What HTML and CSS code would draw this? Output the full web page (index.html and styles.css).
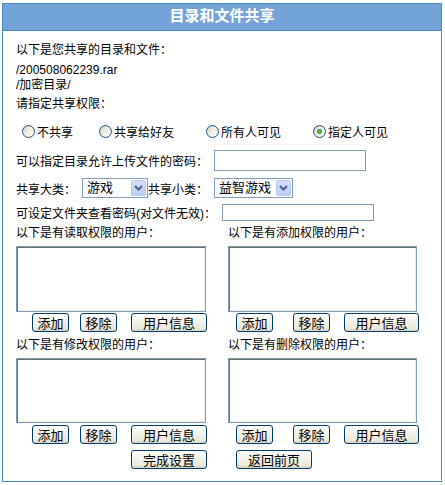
FILE: index.html
```html
<!DOCTYPE html>
<html lang="zh-CN">
<head>
<meta charset="utf-8">
<title>目录和文件共享</title>
<link rel="stylesheet" href="styles.css">
</head>
<body>
<div class="panel">
  <div class="panel-head">目录和文件共享</div>
  <div class="panel-body">
    <div class="line intro">以下是您共享的目录和文件：</div>
    <div class="files">
      <div class="line">/200508062239.rar</div>
      <div class="line">/加密目录/</div>
    </div>
    <div class="line perm-title">请指定共享权限：</div>
    <div class="radios">
      <label class="opt"><input type="radio" name="perm" class="radio">不共享</label>
      <label class="opt"><input type="radio" name="perm" class="radio">共享给好友</label>
      <label class="opt"><input type="radio" name="perm" class="radio">所有人可见</label>
      <label class="opt"><input type="radio" name="perm" class="radio" checked>指定人可见</label>
    </div>
    <div class="row row-pwd">
      <span>可以指定目录允许上传文件的密码：</span>
      <input type="text" class="text text-pwd">
    </div>
    <div class="row row-cat">
      <span>共享大类：</span>
      <span class="sel sel-a"><select><option>游戏</option></select><span class="arrow"><svg width="9" height="6" viewBox="0 0 9 6"><path d="M1 1 L4.5 4.5 L8 1" fill="none" stroke="#4d6185" stroke-width="2"/></svg></span></span>
      <span class="after-sel">共享小类：</span>
      <span class="sel sel-b"><select><option>益智游戏</option></select><span class="arrow"><svg width="9" height="6" viewBox="0 0 9 6"><path d="M1 1 L4.5 4.5 L8 1" fill="none" stroke="#4d6185" stroke-width="2"/></svg></span></span>
    </div>
    <div class="row row-view">
      <span>可设定文件夹查看密码(对文件无效)：</span>
      <input type="text" class="text text-view">
    </div>

    <div class="pair pair-first">
      <div class="col col-left">
        <div class="line">以下是有读取权限的用户：</div>
        <textarea class="users users-a"></textarea>
        <div class="btns btns-left btns-a">
          <button class="btn btn-s">添加</button>
          <button class="btn btn-s">移除</button>
          <button class="btn btn-l">用户信息</button>
        </div>
      </div>
      <div class="col col-right">
        <div class="line">以下是有添加权限的用户：</div>
        <textarea class="users users-a users-r"></textarea>
        <div class="btns btns-right btns-a">
          <button class="btn btn-s">添加</button>
          <button class="btn btn-s">移除</button>
          <button class="btn btn-l">用户信息</button>
        </div>
      </div>
    </div>

    <div class="pair pair-second">
      <div class="col col-left">
        <div class="line">以下是有修改权限的用户：</div>
        <textarea class="users users-b"></textarea>
        <div class="btns btns-left btns-b">
          <button class="btn btn-s">添加</button>
          <button class="btn btn-s">移除</button>
          <button class="btn btn-l">用户信息</button>
        </div>
        <div class="final final-left">
          <button class="btn btn-l">完成设置</button>
        </div>
      </div>
      <div class="col col-right">
        <div class="line">以下是有删除权限的用户：</div>
        <textarea class="users users-b users-r"></textarea>
        <div class="btns btns-right btns-b">
          <button class="btn btn-s">添加</button>
          <button class="btn btn-s">移除</button>
          <button class="btn btn-l">用户信息</button>
        </div>
        <div class="final final-right">
          <button class="btn btn-l">返回前页</button>
        </div>
      </div>
    </div>
  </div>
</div>
</body>
</html>
```
FILE: styles.css
```css
* { box-sizing: border-box; }
html, body { margin: 0; padding: 0; background: #fff; }
body {
  font-family: "Liberation Sans", "Noto Sans CJK SC", sans-serif;
  font-size: 12px;
  color: #000;
}
.panel {
  margin: 3px 0 0 2px;
  width: 440px;
  border: 1px solid #4a8ec0;
}
.panel-head {
  height: 27px;
  line-height: 24px;
  background: #74a4d7;
  border-bottom: 1px solid #4a8ec0;
  color: #fff;
  font-weight: bold;
  font-size: 15px;
  text-align: center;
}
.panel-body {
  padding: 12px 13px 12px 13px;
}
.line { line-height: 15px; height: 15px; white-space: nowrap; }
.files { margin-top: 5px; }
.perm-title { margin-top: 4px; }

.radios {
  margin-top: 9px;
  height: 20px;
  padding-left: 6px;
  display: grid;
  grid-template-columns: 77px 107px 107px auto;
  align-items: center;
}
.opt { display: flex; align-items: center; white-space: nowrap; }
.radio {
  appearance: none;
  -webkit-appearance: none;
  width: 13px;
  height: 13px;
  margin: 0 2px 0 0;
  border: 1px solid #1c5180;
  border-radius: 50%;
  background: linear-gradient(135deg, #d2cfc4 0%, #eceae2 45%, #ffffff 100%);
}
.radio:checked {
  background:
    radial-gradient(circle at 50% 50%, #62c957 0, #2fa22a 2px, transparent 3px),
    linear-gradient(135deg, #d2cfc4 0%, #eceae2 45%, #ffffff 100%);
}

.row { display: flex; align-items: center; white-space: nowrap; }
.row-pwd { margin-top: 9px; height: 21px; }
.row-cat { margin-top: 7px; height: 20px; }
.row-view { margin-top: 6px; height: 17px; }

.text {
  border: 1px solid #7f9db9;
  background: #fff;
  padding: 0 2px;
  font: inherit;
}
.text-pwd { width: 152px; height: 21px; margin-left: 6px; }
.text-view { width: 152px; height: 17px; margin-left: 6px; }

.sel {
  position: relative;
  display: inline-block;
  height: 20px;
  margin-left: 6px;
}
.sel-a { width: 66px; }
.sel-b { width: 79px; }
.sel select {
  appearance: none;
  -webkit-appearance: none;
  width: 100%;
  height: 100%;
  border: 1px solid #7f9db9;
  border-radius: 0;
  background: #fff;
  font-family: "Noto Sans CJK SC", sans-serif;
  font-size: 13px;
  line-height: 16px;
  padding: 0 0 2px 4px;
  color: #000;
}
.arrow {
  position: absolute;
  right: 2px;
  top: 2px;
  width: 15px;
  height: 16px;
  background: linear-gradient(#d4e0fd, #b9cdf8);
  border: 1px solid #b6c9f3;
  border-radius: 2px;
  display: flex;
  align-items: center;
  justify-content: center;
  pointer-events: none;
}

.pair { display: flex; }
.pair-first { margin-top: 5px; }
.pair-second { margin-top: 6px; }
.col-left { width: 212px; }
.col-right { flex: 1; }

.users {
  display: block;
  resize: none;
  border: 1px solid #7f9db9;
  box-shadow: inset 1px 1px 0 #716f64, inset -1px -1px 0 #f1efe2;
  margin: 5px 0 0 0;
  padding: 0;
  width: 190px;
}
.users-r { width: 189px; }
.users-a { height: 66px; }
.users-b { height: 65px; }

.btns { display: flex; }
.btns-a { margin-top: 1px; }
.btns-b { margin-top: 2px; }
.btns-left { padding-left: 16px; }
.btns-left .btn:nth-child(2) { margin-left: 11px; }
.btns-left .btn:nth-child(3) { margin-left: 14px; }
.btns-right { padding-left: 8px; }
.btns-right .btn:nth-child(2) { margin-left: 20px; }
.btns-right .btn:nth-child(3) { margin-left: 14px; width: 75px; }

.btn {
  height: 19px;
  padding: 0;
  border: 1px solid #003c74;
  border-radius: 3px;
  background: linear-gradient(#ffffff 0%, #f4f3ee 40%, #ece9d8 85%, #d6d0c5 100%);
  font-family: "Noto Sans CJK SC", sans-serif;
  font-size: 13px;
  line-height: 15px;
  color: #000;
}
.btn-s { width: 37px; }
.btn-l { width: 76px; }

.final { margin-top: 6px; display: flex; }
.final-left { padding-left: 115px; }
.final-right { padding-left: 8px; }
```
